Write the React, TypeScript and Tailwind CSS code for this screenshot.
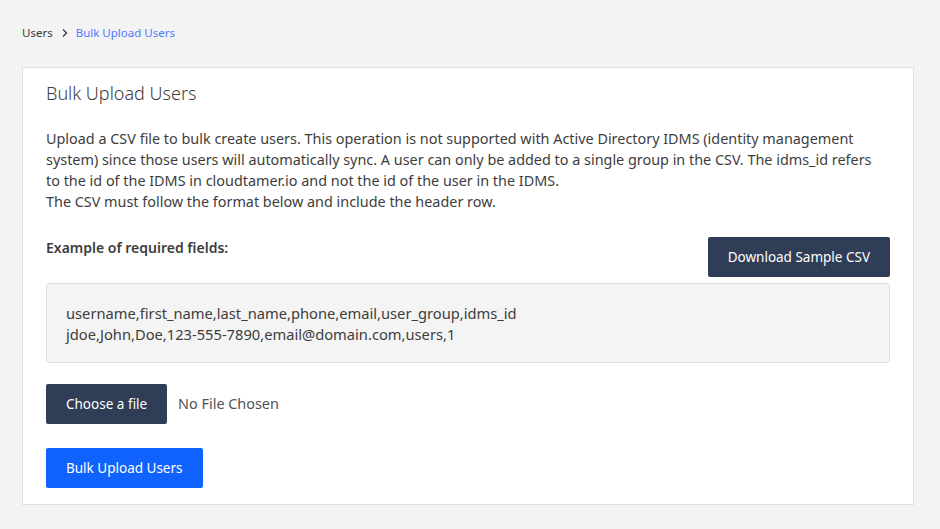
import React from "react";

export default function App() {
  const font = { fontFamily: '"Noto Sans", "Open Sans", sans-serif' };
  return (
    <div className="min-h-[529px] w-full bg-[#f3f3f3] pl-[22px] pr-[26px] pt-[24px] pb-[25px] text-[#393939]" style={font}>
      <nav className="flex items-center h-[16px] text-[11.5px] leading-[16px] pt-[1px]">
        <span className="text-[#393939]">Users</span>
        <svg className="ml-[9px] mr-[8px]" width="6" height="10" viewBox="0 0 6 10" fill="none">
          <path d="M1 1.5 L4.5 5 L1 8.5" stroke="#393939" strokeWidth="1.3" />
        </svg>
        <span className="text-[#5178ff]">Bulk Upload Users</span>
      </nav>
      <div className="mt-[27px] bg-white border border-[#e0e0e0] px-[23px] pt-[12px] pb-[16px]">
        <h1 className="text-[18px] leading-[26px] font-light text-[#3d3d3d]">Bulk Upload Users</h1>
        <p className="mt-[22px] text-[14.4px] leading-[21px] text-[#3d3d3d]">
          Upload a CSV file to bulk create users. This operation is not supported with Active Directory IDMS (identity management
          <br />
          system) since those users will automatically sync. A user can only be added to a single group in the CSV. The idms_id refers
          <br />
          to the id of the IDMS in cloudtamer.io and not the id of the user in the IDMS.
          <br />
          The CSV must follow the format below and include the header row.
        </p>
        <div className="mt-[25px] flex items-start justify-between">
          <div className="pt-[2px] text-[14px] leading-[18px] font-semibold text-[#3d3d3d]">Example of required fields:</div>
          <button className="h-[40px] px-[20px] bg-[#303d57] text-white text-[13.5px] rounded-[2px]">Download Sample CSV</button>
        </div>
        <div className="mt-[6px] h-[80px] bg-[#f4f4f4] border border-[#e0e0e0] rounded-[3px] px-[19px] pt-[19px] text-[14.7px] leading-[21px] text-[#3d3d3d]">
          <div>username,first_name,last_name,phone,email,user_group,idms_id</div>
          <div>jdoe,John,Doe,123-555-7890,email@domain.com,users,1</div>
        </div>
        <div className="mt-[21px] flex items-center">
          <button className="h-[40px] px-[20px] bg-[#303d57] text-white text-[13.5px] rounded-[2px]">Choose a file</button>
          <span className="ml-[11px] text-[14.4px] text-[#525252]">No File Chosen</span>
        </div>
        <div className="mt-[24px]">
          <button className="h-[40px] px-[20px] bg-[#0f62fe] text-white text-[13.5px] rounded-[2px]">Bulk Upload Users</button>
        </div>
      </div>
    </div>
  );
}
